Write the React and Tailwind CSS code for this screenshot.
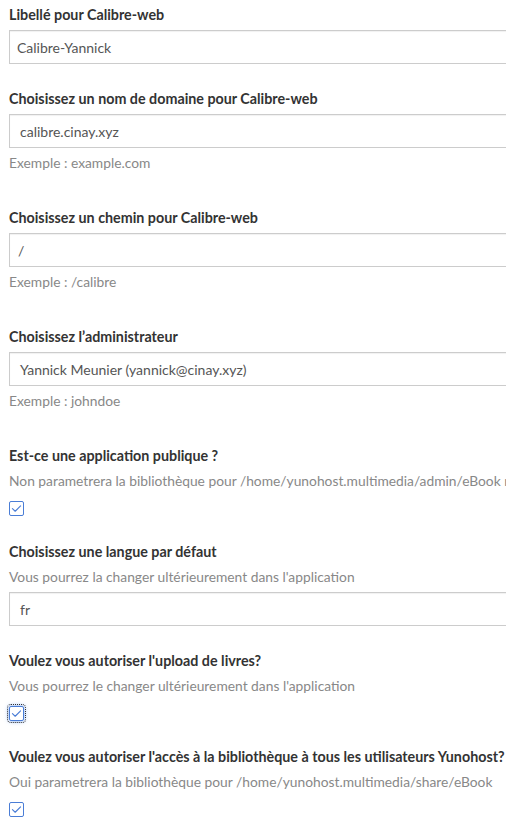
import React from 'react'

const Check = ({ focused }) => (
  <div className={`mt-[10px] mb-[1px] flex h-[15px] w-[15px] items-center justify-center rounded-[2px] border border-[#4a7dd6] bg-white ${focused ? 'outline-1 outline-dotted outline-offset-1 outline-[#333] shadow-[0_0_5px_#7ba7f0]' : ''}`}>
    <svg viewBox="0 0 16 16" className="h-[13px] w-[13px]" fill="none">
      <path d="M3 8.2 L6.4 11.4 L13 4.8" stroke="#4a7dd6" strokeWidth="1.4" strokeLinecap="round" strokeLinejoin="round" />
    </svg>
  </div>
)

const Label = ({ children }) => (
  <label className="block h-5 whitespace-nowrap text-[14.3px] font-bold leading-5 text-[#333]">{children}</label>
)

const Help = ({ children }) => (
  <div className="h-5 whitespace-nowrap text-[13.8px] leading-5 text-[#888]">{children}</div>
)

const Input = ({ value, pad = 'px-[10px]' }) => (
  <div className={`flex h-[34px] w-[600px] items-center border border-[#ccc] text-[14px] text-[#555] shadow-[inset_0_1px_1px_rgba(0,0,0,0.06)] ${pad}`}>
    {value}
  </div>
)

const Group = ({ children }) => <div className="mb-[25px] flex flex-col items-start">{children}</div>

export default function App() {
  return (
    <div className="h-screen w-full overflow-hidden bg-white" style={{ fontFamily: 'Lato, "Open Sans", sans-serif' }}>
      <div className="w-[700px] pl-[9px] pt-[5px]">
        <Group>
          <Label>Libellé pour Calibre-web</Label>
          <div className="mt-[5px]"><Input value="Calibre-Yannick" pad="px-[7px]" /></div>
        </Group>

        <Group>
          <Label>Choisissez un nom de domaine pour Calibre-web</Label>
          <div className="mt-[5px]"><Input value="calibre.cinay.xyz" /></div>
          <div className="mb-[10px] mt-[5px]"><Help>Exemple : example.com</Help></div>
        </Group>

        <Group>
          <Label>Choisissez un chemin pour Calibre-web</Label>
          <div className="mt-[5px]"><Input value="/" pad="px-[8px]" /></div>
          <div className="mb-[10px] mt-[5px]"><Help>Exemple : /calibre</Help></div>
        </Group>

        <Group>
          <Label>Choisissez l’administrateur</Label>
          <div className="mt-[5px]"><Input value="Yannick Meunier (yannick@cinay.xyz)" /></div>
          <div className="mb-[10px] mt-[5px]"><Help>Exemple : johndoe</Help></div>
        </Group>

        <Group>
          <Label>Est-ce une application publique ?</Label>
          <div className="mt-[5px]"><Help>Non parametrera la bibliothèque pour /home/yunohost.multimedia/admin/eBook non</Help></div>
          <Check />
        </Group>

        <Group>
          <Label>Choisissez une langue par défaut</Label>
          <div className="mt-[5px]"><Help>Vous pourrez la changer ultérieurement dans l'application</Help></div>
          <div className="mt-[5px]"><Input value="fr" /></div>
        </Group>

        <Group>
          <Label>Voulez vous autoriser l'upload de livres?</Label>
          <div className="mt-[5px]"><Help>Vous pourrez le changer ultérieurement dans l'application</Help></div>
          <Check focused />
        </Group>

        <Group>
          <Label>Voulez vous autoriser l'accès à la bibliothèque à tous les utilisateurs Yunohost?</Label>
          <div className="mt-[5px]"><Help>Oui parametrera la bibliothèque pour /home/yunohost.multimedia/share/eBook</Help></div>
          <Check />
        </Group>
      </div>
    </div>
  )
}
